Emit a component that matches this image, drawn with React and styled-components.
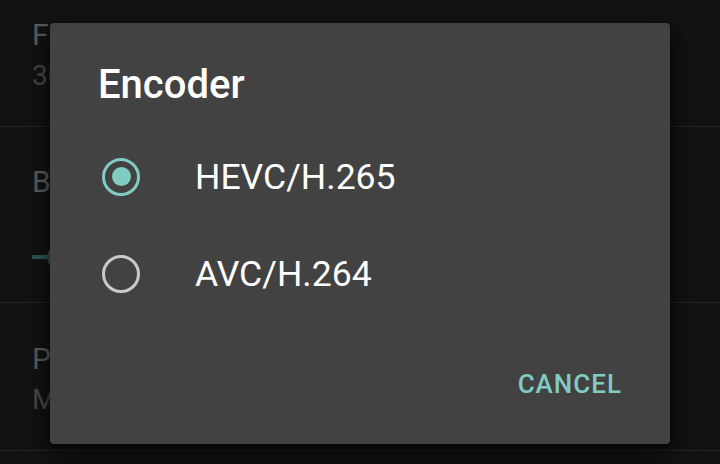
import React, { useState } from "react"
import styled, { createGlobalStyle } from "styled-components"

const GlobalStyle = createGlobalStyle`
  html, body {
    margin: 0;
    padding: 0;
    background: #121212;
    font-family: Roboto, "Noto Sans", "Liberation Sans", sans-serif;
  }
  #root {
    position: relative;
    width: 720px;
    height: 464px;
    overflow: hidden;
  }
`

const Settings = styled.div`
  display: flex;
  flex-direction: column;
`

const Row = styled.div`
  box-sizing: border-box;
  height: ${(p) => p.h}px;
  padding: ${(p) => p.pt}px 0 0 32px;
  border-bottom: 1px solid #232323;
  display: flex;
  flex-direction: column;
  gap: 6px;
`

const Title = styled.div`
  font-size: 30px;
  line-height: 36px;
  color: #5b5b5b;
`

const Summary = styled.div`
  font-size: 28px;
  line-height: 34px;
  color: #474747;
`

const Slider = styled.div`
  margin-top: 31px;
  height: 40px;
  display: flex;
  align-items: center;
  position: relative;
`

const Track = styled.div`
  height: 4px;
  width: 200px;
  background: #2f5552;
`

const Thumb = styled.div`
  position: absolute;
  left: 15px;
  top: 8px;
  width: 24px;
  height: 24px;
  border-radius: 50%;
  background: #2f5552;
`

const Dialog = styled.div`
  position: absolute;
  left: 50px;
  top: 23px;
  width: 620px;
  height: 421px;
  box-sizing: border-box;
  background: #424242;
  border-radius: 4px;
  box-shadow: 0 10px 28px rgba(0, 0, 0, 0.55), 0 4px 10px rgba(0, 0, 0, 0.4);
  padding: 38px 0 45px 48px;
  display: flex;
  flex-direction: column;
`

const DialogTitle = styled.div`
  font-size: 40px;
  line-height: 48px;
  font-weight: 500;
  color: #ffffff;
`

const Options = styled.div`
  margin-top: 19px;
  display: flex;
  flex-direction: column;
`

const Option = styled.label`
  height: 97px;
  display: flex;
  align-items: center;
  gap: 55px;
  padding-left: 4px;
  cursor: pointer;
`

const Radio = styled.span`
  box-sizing: border-box;
  width: 38px;
  height: 38px;
  border-radius: 50%;
  border: 3.5px solid ${(p) => (p.checked ? "#80cbc4" : "#c9c9c9")};
  display: flex;
  align-items: center;
  justify-content: center;

  &::after {
    content: "";
    width: 19px;
    height: 19px;
    border-radius: 50%;
    background: #80cbc4;
    display: ${(p) => (p.checked ? "block" : "none")};
  }
`

const OptionText = styled.span`
  font-size: 35.6px;
  line-height: 42px;
  color: #ffffff;
`

const Actions = styled.div`
  margin-top: auto;
  display: flex;
  justify-content: flex-end;
  padding-right: 48px;
`

const TextButton = styled.button`
  background: none;
  border: none;
  padding: 0;
  font-family: inherit;
  font-size: 26px;
  line-height: 30px;
  font-weight: 500;
  letter-spacing: 1px;
  color: #80cbc4;
  cursor: pointer;
`

const encoders = ["HEVC/H.265", "AVC/H.264"]

export default function App() {
  const [encoder, setEncoder] = useState(encoders[0])

  return (
    <>
      <GlobalStyle />
      <Settings>
        <Row h={127} pt={17}>
          <Title>Frame rate</Title>
          <Summary>30 fps</Summary>
        </Row>
        <Row h={176} pt={37}>
          <Title>Bitrate</Title>
          <Slider>
            <Track />
            <Thumb />
          </Slider>
        </Row>
        <Row h={148} pt={38}>
          <Title>Profile</Title>
          <Summary>Main</Summary>
        </Row>
      </Settings>
      <Dialog>
        <DialogTitle>Encoder</DialogTitle>
        <Options>
          {encoders.map((e) => (
            <Option key={e} onClick={() => setEncoder(e)}>
              <Radio checked={encoder === e} />
              <OptionText>{e}</OptionText>
            </Option>
          ))}
        </Options>
        <Actions>
          <TextButton>CANCEL</TextButton>
        </Actions>
      </Dialog>
    </>
  )
}
